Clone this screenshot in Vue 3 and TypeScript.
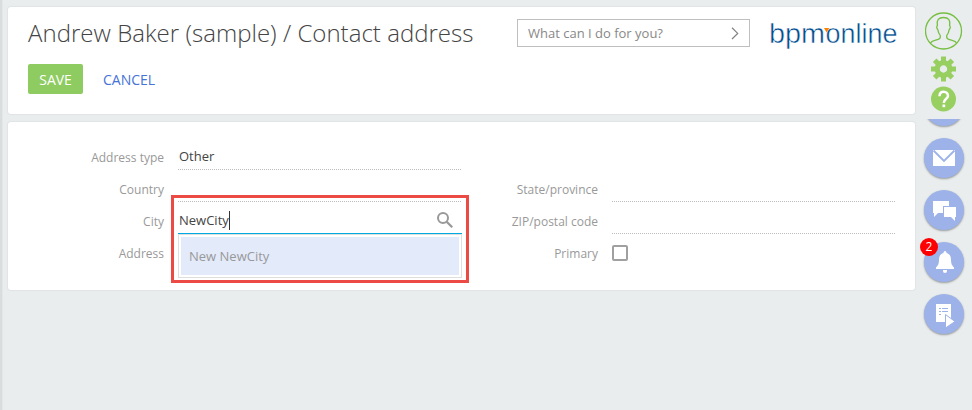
<script setup lang="ts">
import { ref } from 'vue'

const title = ref('Andrew Baker (sample) / Contact address')
const city = ref('NewCity')
const notifications = ref(2)
</script>

<template>
  <div class="page">
    <main class="content">
      <header class="card head">
        <div class="head-left">
          <h1>{{ title }}</h1>
          <div class="actions">
            <button class="save">SAVE</button>
            <button class="cancel">CANCEL</button>
          </div>
        </div>
        <div class="command">
          <span>What can I do for you?</span>
          <svg width="8" height="13" viewBox="0 0 8 13"><path d="M1 .8 6.700 6.400 1 12" fill="none" stroke="#828282" stroke-width="1.200" /></svg>
        </div>
        <svg class="logo" width="132" height="36" viewBox="0 0 132 36">
          <g class="logo-text">
            <text x="0" y="25" textLength="56" lengthAdjust="spacingAndGlyphs">bpm</text>
            <text x="56.500" y="25" textLength="72" lengthAdjust="spacingAndGlyphs">online</text>
          </g>
          <path d="M55 10H60.200L57.600 14.500Z" fill="#ff8200" />
        </svg>
      </header>

      <section class="card form">
        <div class="col left">
          <div class="row"><label>Address type</label><div class="field">Other</div></div>
          <div class="row"><label>Country</label><div class="field"></div></div>
          <div class="row">
            <label>City</label>
            <div class="field active">
              <span>{{ city }}</span><i class="caret"></i>
              <svg class="search" width="18" height="18" viewBox="0 0 18 18"><circle cx="7" cy="7" r="5" fill="none" stroke="#999" stroke-width="2" /><path d="m10.700 10.700 5.500 5.500" stroke="#999" stroke-width="2.300" /></svg>
              <div class="dropdown"><div class="option">New {{ city }}</div></div>
              <div class="highlight"></div>
            </div>
          </div>
          <div class="row"><label>Address</label></div>
        </div>
        <div class="col right">
          <div class="row"><label>State/province</label><div class="field"></div></div>
          <div class="row"><label>ZIP/postal code</label><div class="field"></div></div>
          <div class="row"><label>Primary</label><span class="check"></span></div>
        </div>
      </section>
    </main>

    <aside class="side">
      <svg class="user" width="38" height="38" viewBox="0 0 38 38" fill="none" stroke="#77bf43" stroke-width="1.300">
        <circle cx="18.500" cy="19" r="18" />
        <path d="M5.500 31C6.500 28.500 9.500 28.800 12.500 27.700C15.500 26.700 15.800 25.600 15.200 23.400C13.500 21.500 13.100 19.500 12.800 17.600C11.500 16.500 11.500 14.200 12.400 13.500C11.500 8 13.500 5.500 18.500 5.500S25.500 8 24.600 13.500C25.500 14.200 25.500 16.500 24.200 17.600C23.900 19.500 23.500 21.500 21.800 23.400C21.200 25.600 21.500 26.700 24.500 27.700C27.500 28.800 30.500 28.500 31.500 31" />
      </svg>
      <svg class="gear" width="26" height="26" viewBox="-12.500 -13 26 26">
        <g fill="#97cf60">
          <rect v-for="a in 8" :key="a" x="-2.500" y="-12.500" width="5" height="7" :transform="`rotate(${a * 45})`" />
        </g>
        <circle r="6.300" fill="none" stroke="#97cf60" stroke-width="5.200" />
      </svg>
      <svg class="help" width="26" height="26" viewBox="0 0 26 26">
        <circle cx="12.500" cy="13" r="12.500" fill="#97cf60" />
        <path d="M8.500 10.300C8.500 7.300 10.200 5.700 12.700 5.700S17 7.400 17 9.900C17 12.700 12.800 13 12.800 17" fill="none" stroke="#fff" stroke-width="2.500" />
        <rect x="11.500" y="18.500" width="2.700" height="2.700" fill="#fff" />
      </svg>

      <div class="panel">
        <div class="round"></div>
        <div class="round">
          <svg width="40" height="40" viewBox="0 0 40 40"><path d="M9 12H31V28H9Z" fill="#fff" /><path d="m9.500 12.500 10.500 10.500 10.500-10.500" fill="none" stroke="#9cb2e9" stroke-width="1.800" /></svg>
        </div>
        <div class="round">
          <svg width="40" height="40" viewBox="0 0 40 40" fill="#fff"><path d="M9 11H25V16H19V23H14L10 27V23H9Z" /><path d="M20 17H32V27H31V31L27 27H20Z" /></svg>
        </div>
        <div class="round">
          <svg width="40" height="40" viewBox="0 0 40 40" fill="#fff"><path d="M21 9C22 9 22.500 9.700 22.500 11C26 12 27 14.500 27 18C27 22 28 23.500 30 25.500V27H12V25.500C14 23.500 15 22 15 18C15 14.500 16 12 19.500 11C19.500 9.700 20 9 21 9Z" /><path d="M19 28H23V29Q23 31 21 31T19 29Z" /></svg>
          <span class="badge">{{ notifications }}</span>
        </div>
        <div class="round">
          <svg width="40" height="40" viewBox="0 0 40 40"><path d="M12 10H27V28H12Z" fill="#fff" /><path d="M15 14.500H17M18 14.500H24M15 17.500H17M18 17.500H24M15 20.500H17" stroke="#9cb2e9" /><path d="m21.500 20.500 9.500 7-9.500 6.500Z" fill="#fff" stroke="#9cb2e9" /></svg>
        </div>
      </div>
    </aside>
  </div>
</template>

<style>
body { background: #e9eded; overflow: hidden; }
</style>

<style scoped>
* { box-sizing: border-box; }
.page { display: flex; height: 410px; background: #e9eded; border-left: 2px solid #d9dddd; font-family: "Open Sans", sans-serif; color: #444; box-shadow: inset 1px 0 #e2e7e7; }
.content { width: 913px; padding: 7px 0 0 6px; display: flex; flex-direction: column; gap: 8px; flex: none; }
.card { background: #fff; border-radius: 3px; box-shadow: 0 0 1px 1px #e1e4e4; }
.head { height: 107px; display: flex; }
.head-left { width: 509px; padding-left: 20px; }
h1 { font-size: 24px; line-height: 34px; font-weight: 300; letter-spacing: .025px; margin: 9px 0 0; white-space: nowrap; }
.actions { display: flex; margin-top: 14px; }
button { border: 0; font: 14px/32px "Open Sans", sans-serif; padding: 0; height: 30px; }
.save { width: 55px; border-radius: 2px; background: #8ecb60; color: #fff; font-weight: 500; letter-spacing: -.1px; }
.cancel { margin-left: 20px; background: none; color: #4673d8; }
.command { width: 233px; height: 28px; margin-top: 12px; border: 1px solid #bfbfbf; display: flex; align-items: center; justify-content: space-between; padding: 0 10px; font-size: 13px; color: #888; }
.logo { margin: 11px 0 0 19px; }
.logo-text { font-family: "Liberation Sans", Arial, sans-serif; font-size: 27.500px; fill: #004b8d; stroke: #fff; stroke-width: .5px; }
.form { height: 168px; display: flex; padding-top: 16px; }
.col { display: flex; flex-direction: column; }
.left { width: 454px; }
.right { width: 433px; padding-top: 32px; }
.row { height: 32px; display: flex; }
.row label { text-align: right; font-size: 12px; line-height: 17px; color: #999; padding-top: 11px; flex: none; }
.left label { width: 156px; margin-right: 14px; }
.right label { width: 136px; margin-right: 14px; }
.field { flex: 1; height: 32px; font-size: 13px; line-height: 18px; padding: 9px 0 0 1px; background: repeating-linear-gradient(90deg, #bcbcbc 0 1px, transparent 1px 2px) bottom / 100% 1px no-repeat; }
.active { position: relative; display: flex; background: linear-gradient(#00a9df, #00a9df) bottom / 100% 1px no-repeat; }
.caret { width: 1px; height: 19px; background: #333; }
.search { margin-left: auto; margin-right: 8px; }
.dropdown { position: absolute; top: 32px; left: 0; width: 284px; height: 44px; background: #fff; border: 1px solid #dfdfdf; padding: 2px; }
.option { background: #e3eafa; height: 38px; line-height: 38px; padding-left: 8px; color: #999; }
.highlight { position: absolute; left: -7px; top: -7px; width: 298px; height: 88px; border: 3px solid #eb4a45; }
.check { width: 16px; height: 16px; border: 2px solid #a0a0a0; border-radius: 2px; margin-top: 11px; }
.side { flex: 1; display: flex; flex-direction: column; align-items: center; padding-top: 12px; }
.side > svg { flex: none; }
.gear { margin-top: 6px; }
.help { margin-top: 4px; }
.panel { margin-top: 7px; margin-left: 1px; width: 54px; height: 291px; overflow: hidden; display: flex; flex-direction: column; align-items: center; gap: 12px; }
.round:first-child { margin-top: -33px; }
.round { position: relative; width: 40px; height: 40px; border-radius: 50%; background: #9cb2e9; box-shadow: 0 1px 2px #999; flex: none; }
.round svg { display: block; }
.badge { position: absolute; left: -4px; top: -4px; width: 18px; height: 18px; border-radius: 50%; background: #f00; color: #fff; font-size: 12px; line-height: 18px; text-align: center; }
</style>
